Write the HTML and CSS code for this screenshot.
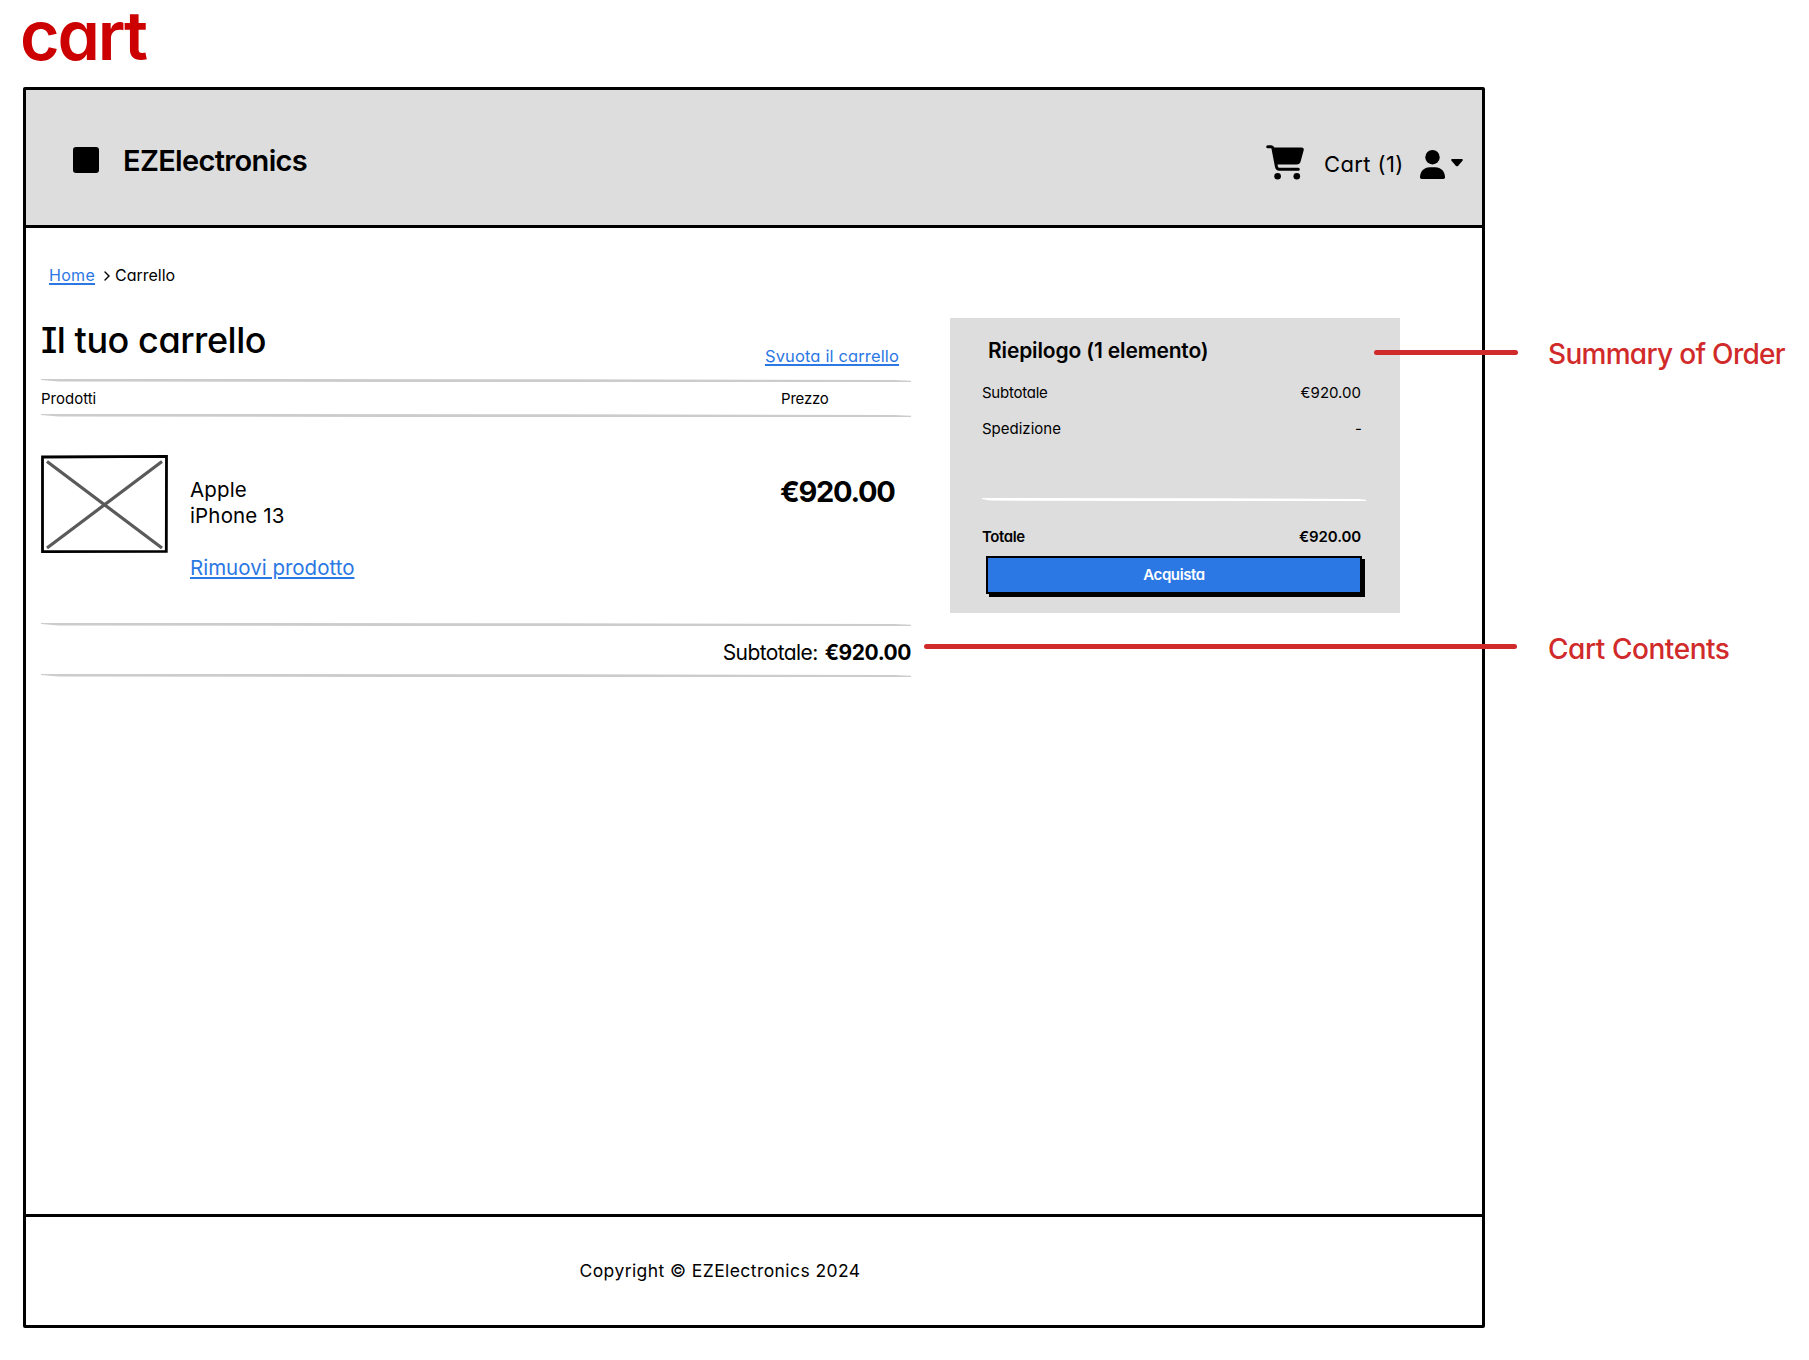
FILE: index.html
```html
<!DOCTYPE html>
<html lang="it">
<head>
<meta charset="utf-8">
<title>EZElectronics - Carrello</title>
<link rel="stylesheet" href="styles.css">
</head>
<body>
<div class="board">
  <h1 class="board-title">cart</h1>
  <div class="frame">
    <header class="header">
      <span class="logo"></span>
      <span class="brand">EZElectronics</span>
      <div class="account">
        <svg class="icon-cart" viewBox="0 0 38 35"><path d="M1.7 1.7H5.2Q6.6 1.7 6.9 3.2L10.4 21.5Q10.9 24.3 13.4 24.3H32.3" fill="none" stroke="#000" stroke-width="3" stroke-linecap="round" stroke-linejoin="round"/><path d="M6.5 2.6H35.6Q38.3 2.6 37.7 5.3L34.6 16.6Q33.8 19.6 30.7 19.6H10Z"/><circle cx="11.6" cy="31.2" r="3.3"/><circle cx="30.8" cy="31.2" r="3.3"/></svg>
        <span class="cart-count">Cart (1)</span>
        <svg class="icon-user" viewBox="0 0 25 29"><circle cx="12.5" cy="7.2" r="7.2"/><path d="M0 27.3C0 21.6 4.2 17.3 9.6 17.3H15.4C20.8 17.3 25 21.6 25 27.3Q25 29 23.3 29H1.7Q0 29 0 27.3Z"/></svg>
        <svg class="icon-caret" viewBox="0 0 12 8"><path d="M1.2 0H10.8Q12.4 .3 11.5 1.7L7 6.9Q6 7.8 5 6.9L.5 1.7Q-.4 .3 1.2 0Z"/></svg>
      </div>
    </header>
    <main class="main">
      <nav class="breadcrumb">
        <a class="crumb-home" href="#">Home</a>
        <svg class="icon-chevron" viewBox="0 0 6 10"><path d="M1 1L5 5L1 9" fill="none" stroke="#000" stroke-width="1.4" stroke-linecap="round"/></svg>
        <span class="crumb-here">Carrello</span>
      </nav>
      <div class="columns">
        <section class="cart">
          <div class="cart-head">
            <h2 class="cart-title">Il tuo carrello</h2>
            <a class="empty-link" href="#">Svuota il carrello</a>
          </div>
          <div class="rule"></div>
          <div class="table-head">
            <span class="th-product">Prodotti</span>
            <span class="th-price">Prezzo</span>
          </div>
          <div class="rule"></div>
          <div class="item">
            <svg class="thumb" viewBox="0 0 127 98"><path d="M1.5 2L125.5 1.4L125.3 96.3L1.5 96.6Z" fill="#fff" stroke="#000" stroke-width="2.8"/><path d="M6 6.5L121 93M6 93L121 6.5" stroke="#5a5a5a" stroke-width="3.2"/></svg>
            <div class="item-info">
              <div class="item-brand">Apple</div>
              <div class="item-model">iPhone 13</div>
              <a class="remove-link" href="#">Rimuovi prodotto</a>
            </div>
            <div class="item-price">€920.00</div>
          </div>
          <div class="rule"></div>
          <div class="subtotal"><span class="subtotal-label">Subtotale:</span><strong class="subtotal-value">€920.00</strong></div>
          <div class="rule"></div>
        </section>
        <aside class="summary">
          <h3 class="summary-title">Riepilogo (1 elemento)</h3>
          <div class="line"><span class="line-subtotal">Subtotale</span><span class="line-value">€920.00</span></div>
          <div class="line"><span class="line-shipping">Spedizione</span><span class="dash">-</span></div>
          <div class="rule rule-white"></div>
          <div class="line total"><span class="total-label">Totale</span><span class="total-value">€920.00</span></div>
          <button class="buy"><span class="buy-label">Acquista</span></button>
        </aside>
      </div>
    </main>
    <footer class="footer"><span class="copyright">Copyright © EZElectronics 2024</span></footer>
  </div>
  <div class="note note-summary"><span class="arrow"></span><span class="note-order">Summary of Order</span></div>
  <div class="note note-contents"><span class="arrow"></span><span class="note-cart">Cart Contents</span></div>
</div>
</body>
</html>
```
FILE: styles.css
```css
* { box-sizing: border-box; }
body {
  margin: 0;
  background: #fff;
  color: #000;
  font-family: Inter, "Liberation Sans", sans-serif;
  font-feature-settings: "cv11", "cv08";
  font-size: 15px;
  line-height: 20px;
}
h1, h2, h3 { margin: 0; }
a { color: #2b78e4; text-decoration: underline; text-decoration-thickness: 2px; text-underline-offset: 2px; }
svg { display: block; flex: none; }
.board { position: relative; width: 1809px; height: 1360px; }
.board-title { height: 86px; padding-left: 20px; font-size: 68px; line-height: 70px; font-weight: 600; letter-spacing: -2.1px; color: #cc0000; }
.frame { display: flex; flex-direction: column; width: 1462px; height: 1241px; margin: 1px 0 0 23px; border: 3px solid #000; border-radius: 2px; }
.header { display: flex; align-items: center; height: 138px; padding: 5px 19px 0 47px; background: #ddd; border-bottom: 3px solid #000; }
.logo { width: 26px; height: 26px; border-radius: 3px; background: #000; }
.brand { margin-left: 24px; padding-top: 2px; font-size: 29px; font-weight: 600; line-height: 36px; letter-spacing: -.65px; white-space: nowrap; }
.account { display: flex; align-items: center; margin-left: auto; padding-top: 6px; }
.icon-cart { width: 38px; height: 35px; margin-top: -2px; }
.cart-count { width: 95px; padding: 1px 0 0 20px; font-size: 22px; line-height: 28px; letter-spacing: .4px; white-space: nowrap; }
.icon-user { width: 25px; height: 29px; margin: 2px 6px 0 21px; }
.icon-caret { width: 12px; height: 8px; }
.main { flex: 1; padding: 37px 0 0 15px; }
.breadcrumb { display: flex; align-items: center; height: 20px; margin: 0 0 33px 8px; font-size: 16px; }
.crumb-home { width: 47px; letter-spacing: .3px; }
.icon-chevron { width: 6px; height: 10px; margin: 2px 5px 0 8px; }
.columns { display: flex; align-items: flex-start; }
.cart { width: 870px; }
.cart-head { display: flex; justify-content: space-between; height: 61px; padding-right: 12px; }
.cart-title { font-size: 36px; line-height: 44px; font-weight: 500; letter-spacing: -.45px; }
.empty-link { margin-top: 28px; font-size: 16.5px; letter-spacing: .14px; }
.rule { height: 3px; background: #ccc; clip-path: polygon(0 0, 1% 0, 60% 6%, 98% 35%, 100% 60%, 100% 100%, 40% 100%, 2% 85%, 0 35%); }
.table-head { display: grid; grid-template-columns: 740px 1fr; align-items: center; height: 32px; padding-top: 1px; }
.th-price { letter-spacing: -.2px; }
.item { display: flex; height: 206px; padding-top: 38px; }
.thumb { width: 127px; height: 98px; }
.item-info { width: 591px; padding: 22px 0 0 22px; font-size: 20.5px; line-height: 26px; }
.item-brand, .item-model { letter-spacing: .15px; }
.remove-link { display: inline-block; margin-top: 26px; }
.item-price { margin-top: 20px; padding-left: 21px; font-size: 29px; line-height: 34px; font-weight: 700; letter-spacing: -1.3px; }
.subtotal { display: flex; justify-content: flex-end; align-items: center; gap: 7px; height: 48px; padding-top: 6px; font-size: 21px; }
.subtotal-label { letter-spacing: -.6px; }
.subtotal-value { letter-spacing: -.45px; }
.summary { width: 450px; height: 295px; margin-left: 39px; padding: 20px 34px 0 32px; background: #ddd; }
.summary-title { margin: 0 0 19px 6px; font-size: 21px; line-height: 26px; font-weight: 600; letter-spacing: -.15px; }
.line { display: flex; justify-content: space-between; height: 20px; margin-bottom: 16px; padding-right: 5px; }
.line-subtotal { letter-spacing: -.25px; }
.dash { margin-right: -1px; }
.rule-white { background: #fff; margin-top: 59px; }
.total { margin: 26px 0 9px; font-weight: 600; }
.total-label { letter-spacing: -.4px; }
.total-value { letter-spacing: -.1px; }
.buy { display: block; width: 376px; height: 38px; margin-left: 4px; padding: 0; border: 2px solid #000; background: #2b78e4; color: #fff; font: 600 15px/20px Inter, "Liberation Sans", sans-serif; font-feature-settings: "cv11"; letter-spacing: -.4px; box-shadow: 3px 3px 0 #000; }
.footer { display: flex; align-items: center; justify-content: center; height: 111px; padding-right: 68px; border-top: 3px solid #000; font-size: 17.5px; letter-spacing: .42px; }
.note { position: absolute; display: flex; align-items: center; height: 34px; color: #d12a2a; font-size: 28px; font-weight: 500; line-height: 34px; white-space: nowrap; }
.arrow { height: 5px; margin: -2px 30px 0 0; border-radius: 3px; background: #d12a2a; }
.note-order { padding-top: 2px; letter-spacing: -.7px; }
.note-cart { padding-top: 3px; letter-spacing: -.45px; }
.note-summary { left: 1374px; top: 336px; }
.note-summary .arrow { width: 144px; }
.note-contents { left: 924px; top: 630px; }
.note-contents .arrow { width: 593px; margin-right: 31px; }
```
